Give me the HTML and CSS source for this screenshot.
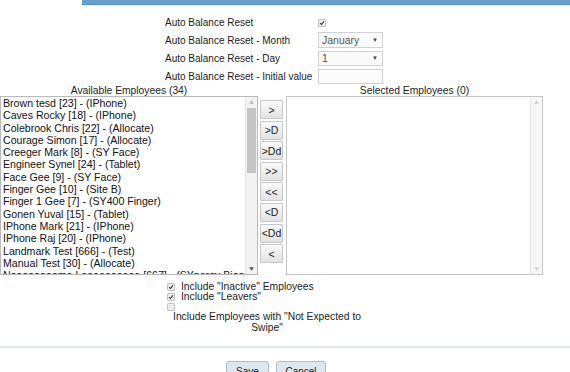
FILE: index.html
```html
<!DOCTYPE html>
<html lang="en">

<head>
  <meta charset="UTF-8">
  <meta name="viewport" content="width=device-width, initial-scale=1.0">
  <title>Auto Balance Reset</title>
  <link rel="stylesheet" href="styles.css">
</head>

<body>

  <div class="topbar"></div>

  <div class="settings">
    <label>Auto Balance Reset</label>
    <div><span class="cb cb-on"><svg viewBox="0 0 8 8"><path d="M1.5 4.2 L3.3 6 L6.6 1.8" /></svg></span></div>

    <label>Auto Balance Reset - Month</label>
    <div class="select sel-month">January<span class="arrow">&#9660;</span></div>

    <label>Auto Balance Reset - Day</label>
    <div class="select sel-day">1<span class="arrow">&#9660;</span></div>

    <label>Auto Balance Reset - Initial value</label>
    <div class="textbox"></div>
  </div>

  <div class="picker">
    <div class="col col-left">
      <div class="col-title">Available Employees (34)</div>
      <div class="listbox">
        <ul class="items">
          <li>Brown tesd [23] - (IPhone)</li>
          <li>Caves Rocky [18] - (IPhone)</li>
          <li>Colebrook Chris [22] - (Allocate)</li>
          <li>Courage Simon [17] - (Allocate)</li>
          <li>Creeger Mark [8] - (SY Face)</li>
          <li>Engineer Synel [24] - (Tablet)</li>
          <li>Face Gee [9] - (SY Face)</li>
          <li>Finger Gee [10] - (Site B)</li>
          <li>Finger 1 Gee [7] - (SY400 Finger)</li>
          <li>Gonen Yuval [15] - (Tablet)</li>
          <li>IPhone Mark [21] - (IPhone)</li>
          <li>IPhone Raj [20] - (IPhone)</li>
          <li>Landmark Test [666] - (Test)</li>
          <li>Manual Test [30] - (Allocate)</li>
          <li>Naaaaaaaame Loooooooooo [667] - (SYnergy Biosmart)</li>
          <li>Office Sam [12] - (Allocate)</li>
        </ul>
        <div class="scrollbar">
          <svg class="sb-arrow" viewBox="0 0 6 4"><polygon points="0,4 3,0 6,4" fill="#b5b5b5" /></svg>
          <div class="sb-thumb"></div>
          <div class="sb-fill"></div>
          <svg class="sb-arrow" viewBox="0 0 6 4"><polygon points="0,0 6,0 3,4" fill="#555" /></svg>
        </div>
      </div>
    </div>

    <div class="movers">
      <button class="mv">&gt;</button>
      <button class="mv">&gt;D</button>
      <button class="mv">&gt;Dd</button>
      <button class="mv">&gt;&gt;</button>
      <button class="mv">&lt;&lt;</button>
      <button class="mv">&lt;D</button>
      <button class="mv">&lt;Dd</button>
      <button class="mv">&lt;</button>
    </div>

    <div class="col col-right">
      <div class="col-title">Selected Employees (0)</div>
      <div class="listbox list-right">
        <ul class="items"></ul>
        <div class="scrollbar sb-off">
          <svg class="sb-arrow" viewBox="0 0 6 4"><polygon points="0,4 3,0 6,4" fill="#cfcfcf" /></svg>
          <div class="sb-fill"></div>
          <svg class="sb-arrow" viewBox="0 0 6 4"><polygon points="0,0 6,0 3,4" fill="#cfcfcf" /></svg>
        </div>
      </div>
    </div>
  </div>

  <div class="options">
    <div class="opt">
      <span class="cb cb-on"><svg viewBox="0 0 8 8"><path d="M1.5 4.2 L3.3 6 L6.6 1.8" /></svg></span>
      <span>Include "Inactive" Employees</span>
    </div>
    <div class="opt">
      <span class="cb cb-on"><svg viewBox="0 0 8 8"><path d="M1.5 4.2 L3.3 6 L6.6 1.8" /></svg></span>
      <span>Include "Leavers"</span>
    </div>
    <div class="opt opt-block">
      <span class="cb"></span>
      <div class="opt-label">Include Employees with "Not Expected to Swipe"</div>
    </div>
  </div>

  <div class="footer">
    <button class="btn btn-save">Save</button>
    <button class="btn btn-cancel">Cancel</button>
  </div>

</body>

</html>
```

FILE: styles.css
```css
body {
  margin: 0;
  font-family: "Liberation Sans", Arial, sans-serif;
  font-size: 10px;
  color: #1c1c1c;
  background-color: #fff;
  overflow: hidden;
}

.topbar {
  height: 4px;
  margin-left: 82px;
  background-color: #6b9fcf;
  border-bottom: 1px solid #5d8fbf;
}

/* settings form */

.settings {
  display: grid;
  grid-template-columns: 153px 65px;
  grid-auto-rows: 18px;
  align-items: center;
  margin: 8px 0 0 165px;
}

.select,
.textbox {
  box-sizing: border-box;
  border: 1px solid #cfd3d6;
  background-color: #fafafa;
}

.select {
  display: flex;
  align-items: center;
  justify-content: space-between;
  padding: 0 4px 0 3px;
  color: #555;
  font-size: 10.5px;
}

.sel-month {
  height: 16px;
}

.sel-day {
  height: 15px;
}

.textbox {
  height: 15px;
  background-color: #fcfcfc;
}

.arrow {
  font-size: 6px;
  color: #444;
}

/* checkboxes */

.cb {
  display: inline-block;
  box-sizing: border-box;
  width: 8px;
  height: 8px;
  border: 1px solid #c4c4c4;
  border-radius: 1px;
  background-color: #ececec;
  vertical-align: middle;
}

.cb svg {
  display: block;
  width: 6px;
  height: 6px;
}

.cb svg path {
  fill: none;
  stroke: #333;
  stroke-width: 1.4;
}

/* employee picker */

.picker {
  display: flex;
  align-items: flex-start;
}

.col-title {
  height: 11px;
  line-height: 11px;
  text-align: center;
  font-size: 10.3px;
}

.col-left {
  width: 258px;
}

.col-right {
  width: 257px;
  margin-left: 3px;
}

.listbox {
  display: flex;
  height: 179px;
  box-sizing: border-box;
  border: 1px solid #b9b9b9;
  background-color: #fff;
}

.list-right {
  border-color: #c6c6c6;
}

.items {
  flex: 1;
  list-style: none;
  margin: 0;
  padding: 0 0 0 2px;
  overflow: hidden;
  white-space: nowrap;
  font-size: 10.6px;
  color: #111;
}

.items li {
  line-height: 12.3px;
}

.scrollbar {
  width: 11px;
  display: flex;
  flex-direction: column;
  align-items: center;
  background-color: #f3f3f3;
  border-left: 1px solid #e6e6e6;
}

.sb-off {
  background-color: #f6f6f6;
}

.sb-arrow {
  width: 5px;
  height: 4px;
  margin: 3px 0;
}

.sb-thumb {
  width: 9px;
  height: 65px;
  margin-top: 1px;
  background-color: #c5c5c5;
}

.sb-fill {
  flex: 1;
}

.movers {
  display: flex;
  flex-direction: column;
  gap: 1.6px;
  margin: 15px 0 0 2px;
}

.mv {
  width: 23px;
  height: 19px;
  padding: 0;
  font-family: "Liberation Sans", Arial, sans-serif;
  font-size: 10.5px;
  color: #222;
  border: 1px solid #c8c8c8;
  border-radius: 1px;
  background: linear-gradient(#fafafa, #e2e2e2);
}

/* include options */

.options {
  width: 200px;
  margin: 7px 0 0 167px;
}

.opt {
  display: flex;
  align-items: center;
  gap: 6px;
  height: 10px;
  line-height: 10px;
  font-size: 10.3px;
}

.opt-block {
  display: block;
  height: auto;
}

.opt-block .cb {
  display: block;
  margin-top: 1px;
}

.opt-label {
  text-align: center;
  line-height: 11px;
}

/* footer */

.footer {
  margin-top: 13px;
  border-top: 2px solid #e0e6eb;
  padding: 13px 0 0 226px;
  display: flex;
  gap: 7px;
}

.btn {
  height: 20px;
  padding: 0 8px;
  font-family: "Liberation Sans", Arial, sans-serif;
  font-size: 10px;
  color: #222;
  background-color: #dfe7ee;
  border: 1px solid #aebccb;
  border-radius: 3px;
}

.btn-save {
  width: 43px;
}

.btn-cancel {
  width: 50px;
}
```
